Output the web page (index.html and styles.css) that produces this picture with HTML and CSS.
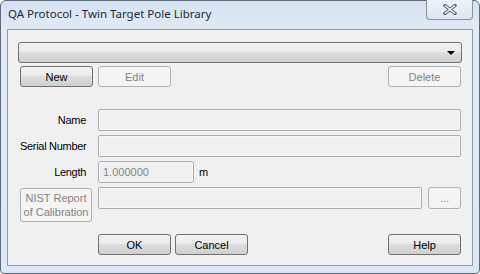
FILE: index.html
```html
<!doctype html>
<html lang="en">
<head>
  <meta charset="UTF-8">
  <title>QA Protocol - Twin Target Pole Library</title>
  <link rel="stylesheet" href="styles.css">
</head>
<body>

<div class="window">
  <div class="titlebar">
    <span class="title">QA Protocol - Twin Target Pole Library</span>
    <button class="close" title="Close">
      <svg width="14" height="11" viewBox="0 0 14 11">
        <path d="M2 1.5 L12 9.5 M12 1.5 L2 9.5" stroke="#5a6470" stroke-width="3.2" stroke-linecap="square"/>
        <path d="M2 1.5 L12 9.5 M12 1.5 L2 9.5" stroke="#ffffff" stroke-width="1.2"/>
      </svg>
    </button>
  </div>

  <div class="client">
    <div class="combo">
      <span class="arrow"></span>
    </div>

    <div class="toolbar">
      <button class="btn">New</button>
      <button class="btn" disabled>Edit</button>
      <span class="spacer"></span>
      <button class="btn" disabled>Delete</button>
    </div>

    <div class="form">
      <div class="row">
        <label class="label">Name</label>
        <div class="field grow"></div>
      </div>
      <div class="row">
        <label class="label">Serial Number</label>
        <div class="field grow"></div>
      </div>
      <div class="row">
        <label class="label">Length</label>
        <div class="field short">1.000000</div>
        <span class="unit">m</span>
      </div>
      <div class="row top">
        <button class="btn tall" disabled>NIST Report<br>of Calibration</button>
        <div class="field grow"></div>
        <button class="btn dots" disabled>...</button>
      </div>
    </div>

    <div class="actions">
      <button class="btn">OK</button>
      <button class="btn">Cancel</button>
      <span class="spacer"></span>
      <button class="btn">Help</button>
    </div>
  </div>
</div>

</body>
</html>
```

FILE: styles.css
```css
body {
  margin: 0;
  background-color: #ffffff;
  font-family: 'Liberation Sans', Arial, sans-serif;
  font-size: 11px;
  color: #000;
}

.window {
  box-sizing: border-box;
  width: 480px;
  height: 274px;
  border: 1px solid #5d6b7a;
  border-radius: 6px 6px 4px 4px;
  background: linear-gradient(to bottom, #d5e2f0 0%, #e3ecf6 12%, #dce7f3 100%);
  padding: 0 6px 7px 6px;
  display: flex;
  flex-direction: column;
}

.titlebar {
  height: 28px;
  flex-shrink: 0;
  display: flex;
  align-items: flex-start;
  position: relative;
}

.title {
  font-family: 'Noto Sans', 'Liberation Sans', sans-serif;
  font-size: 11.5px;
  color: #1e2a36;
  margin: 5px 0 0 1px;
}

.close {
  position: absolute;
  top: -1px;
  right: 0;
  width: 47px;
  height: 20px;
  border: 1px solid #8593a3;
  border-top: none;
  border-radius: 0 0 4px 4px;
  background: linear-gradient(to bottom, #eef3f9 0%, #dde6f0 100%);
  display: flex;
  align-items: center;
  justify-content: center;
  padding: 0;
}

.client {
  flex: 1;
  border: 1px solid #8c9cae;
  background-color: #f0f0f0;
  padding: 12px 11px 0 12px;
  display: flex;
  flex-direction: column;
}

.combo {
  height: 21px;
  flex-shrink: 0;
  margin: 0 -1px 0 -2px;
  box-sizing: border-box;
  border: 1px solid #707070;
  border-radius: 3px;
  background: linear-gradient(to bottom, #f2f2f2 0%, #ebebeb 45%, #dddddd 50%, #cfcfcf 100%);
  display: flex;
  align-items: center;
  justify-content: flex-end;
  padding-right: 6px;
}

.arrow {
  width: 0;
  height: 0;
  border-left: 4px solid transparent;
  border-right: 4px solid transparent;
  border-top: 4px solid #000;
}

.toolbar, .actions {
  display: flex;
  gap: 5px;
  margin-top: 3px;
}

.actions {
  margin-top: 12px;
  padding-left: 78px;
  gap: 4px;
}

.spacer {
  flex: 1;
}

.btn {
  box-sizing: border-box;
  width: 73px;
  height: 21px;
  padding: 0;
  border: 1px solid #707070;
  border-radius: 3px;
  background: linear-gradient(to bottom, #f2f2f2 0%, #ebebeb 45%, #dddddd 50%, #cfcfcf 100%);
  font-family: inherit;
  font-size: 11px;
  color: #000;
}

.btn:disabled {
  border-color: #adb2b5;
  background: #f4f4f4;
  color: #838383;
}

.form {
  margin-top: 22px;
  display: flex;
  flex-direction: column;
  gap: 4px;
}

.row {
  display: flex;
  align-items: center;
  gap: 6px;
}

.row.top {
  align-items: flex-start;
}

.label {
  width: 72px;
  flex-shrink: 0;
  box-sizing: border-box;
  text-align: right;
  padding-right: 6px;
  white-space: nowrap;
  letter-spacing: -0.3px;
}

.field {
  box-sizing: border-box;
  height: 22px;
  border: 1px solid #acacac;
  border-radius: 2px;
  box-shadow: inset 0 0 0 1px #f8f8f8;
  background-color: #f0f0f0;
  color: #838383;
  padding: 4px 0 0 4px;
}

.grow {
  flex: 1;
}

.short {
  width: 96px;
}

.unit {
  margin-left: -1px;
}

.btn.tall {
  height: 34px;
  margin-top: 1px;
  line-height: 14px;
  width: 72px;
}

.btn.dots {
  width: 33px;
  height: 22px;
  line-height: 10px;
}
```
